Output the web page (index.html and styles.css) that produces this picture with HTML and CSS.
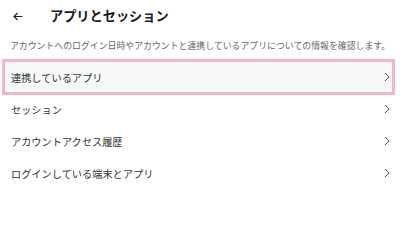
FILE: index.html
```html
<!DOCTYPE html>
<html lang="ja">
<head>
<meta charset="utf-8">
<link rel="stylesheet" href="styles.css">
</head>
<body>
<header class="header">
  <svg class="back" width="10" height="9" viewBox="0 0 10 9"><path d="M9.5 4.5H1M4.5 1L1 4.5L4.5 8" fill="none" stroke="#222" stroke-width="1.2"/></svg>
  <h1 class="title">アプリとセッション</h1>
</header>
<p class="desc">アカウントへのログイン日時やアカウントと連携しているアプリについての情報を確認します。</p>
<ul class="list">
  <li class="row selected"><span>連携しているアプリ</span><svg class="chev" width="6" height="10" viewBox="0 0 6 10"><path d="M1 1L5 5L1 9" fill="none" stroke="#555" stroke-width="1"/></svg></li>
  <li class="row"><span>セッション</span><svg class="chev" width="6" height="10" viewBox="0 0 6 10"><path d="M1 1L5 5L1 9" fill="none" stroke="#555" stroke-width="1"/></svg></li>
  <li class="row"><span>アカウントアクセス履歴</span><svg class="chev" width="6" height="10" viewBox="0 0 6 10"><path d="M1 1L5 5L1 9" fill="none" stroke="#555" stroke-width="1"/></svg></li>
  <li class="row"><span>ログインしている端末とアプリ</span><svg class="chev" width="6" height="10" viewBox="0 0 6 10"><path d="M1 1L5 5L1 9" fill="none" stroke="#555" stroke-width="1"/></svg></li>
</ul>
</body>
</html>
```
FILE: styles.css
```css
html, body {
  margin: 0;
  padding: 0;
  background: #fff;
}
body {
  font-family: "Noto Sans CJK JP", "Noto Sans", sans-serif;
  color: #222;
}
.header {
  height: 32px;
  display: flex;
  align-items: center;
  padding-left: 13px;
}
.back {
  display: block;
}
.title {
  margin: 0 0 0 27px;
  font-size: 13.2px;
  font-weight: 700;
  line-height: 16px;
  color: #1a1a1a;
}
.desc {
  margin: 8px 0 0 10px;
  font-size: 8.9px;
  line-height: 12px;
  color: #666;
  white-space: nowrap;
}
.list {
  list-style: none;
  margin: 9px 7px 0 4px;
  padding: 0;
}
.row {
  height: 32px;
  display: flex;
  align-items: center;
  justify-content: space-between;
  padding: 0 3px 0 7px;
  font-size: 10.2px;
  color: #333;
}
.row.selected {
  background: #f6f7f7;
  outline: 3px solid #f4b5cb;
  outline-offset: -1px;
}
.chev {
  display: block;
}
```
